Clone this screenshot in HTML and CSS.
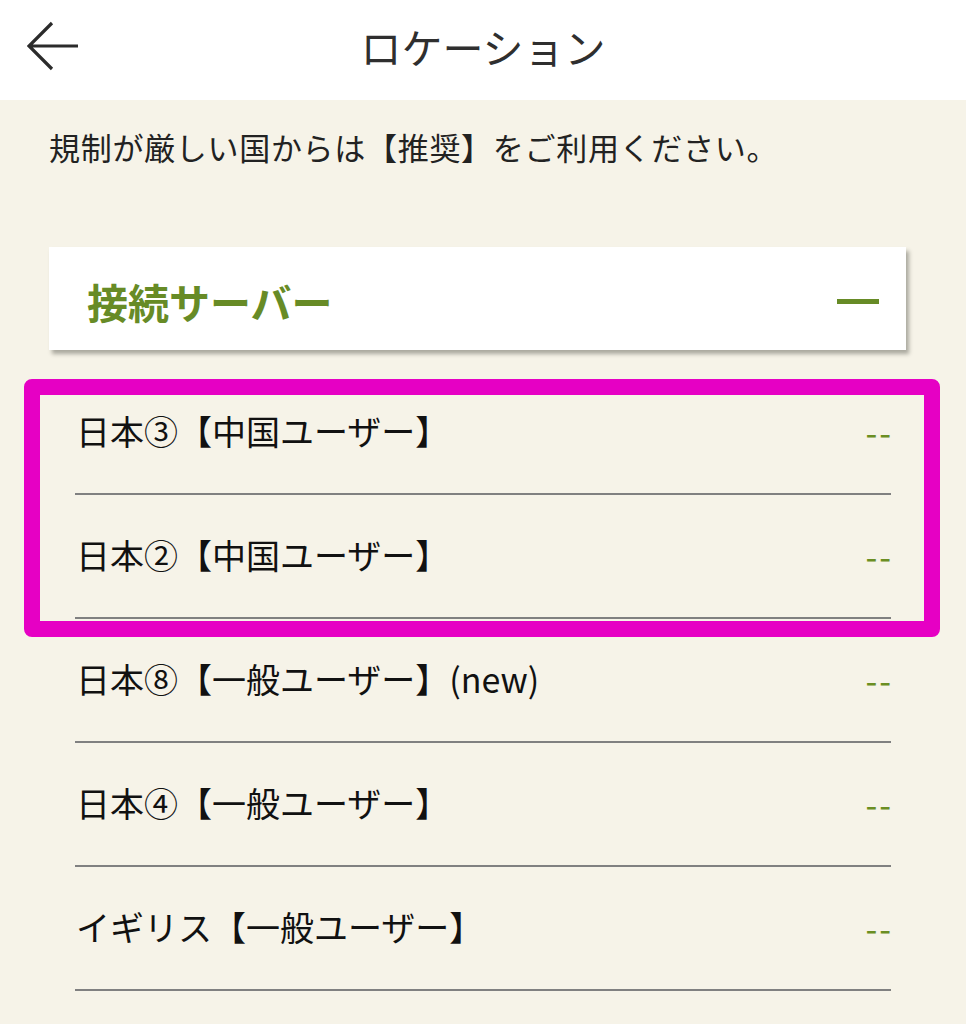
FILE: index.html
```html
<!DOCTYPE html>
<html lang="ja">
<head>
<meta charset="utf-8">
<title>ロケーション</title>
<link rel="stylesheet" href="styles.css">
</head>
<body>
<header class="topbar">
  <div class="back">
    <svg width="54" height="52" viewBox="0 0 54 52" class="back-icon">
      <path d="M25 3 L2 26 L25 49 M2 26 L51 26" fill="none" stroke="#2b2b2b" stroke-width="3.2" stroke-linecap="butt" stroke-linejoin="miter"/>
    </svg>
  </div>
  <h1 class="title">ロケーション</h1>
  <div class="spacer"></div>
</header>
<main class="content">
  <p class="notice">規制が厳しい国からは【推奨】をご利用ください。</p>
  <section class="card">
    <h2 class="card-title">接続サーバー</h2>
    <span class="minus"></span>
  </section>
  <div class="list">
    <div class="row"><span class="name">日本③【中国ユーザー】</span><span class="ping">--</span></div>
    <div class="row"><span class="name">日本②【中国ユーザー】</span><span class="ping">--</span></div>
    <div class="row"><span class="name">日本⑧【一般ユーザー】(new)</span><span class="ping">--</span></div>
    <div class="row"><span class="name">日本④【一般ユーザー】</span><span class="ping">--</span></div>
    <div class="row"><span class="name">イギリス【一般ユーザー】</span><span class="ping">--</span></div>
    <div class="highlight"></div>
  </div>
</main>
</body>
</html>
```
FILE: styles.css
```css
html, body {
  margin: 0;
  padding: 0;
}
body {
  width: 966px;
  height: 1024px;
  overflow: hidden;
  background: #f6f3e8;
  font-family: "Noto Sans CJK JP", "Noto Sans", sans-serif;
  color: #1a1a1a;
}
.topbar {
  height: 100px;
  background: #ffffff;
  display: grid;
  grid-template-columns: 1fr auto 1fr;
  align-items: center;
}
.back {
  padding-left: 27px;
  display: flex;
  align-items: center;
  padding-bottom: 8px;
}
.back-icon {
  display: block;
}
.title {
  margin: 0;
  font-size: 41px;
  font-weight: 400;
  color: #2f2f2f;
  line-height: 1;
  padding-bottom: 8px;
}
.notice {
  margin: 0;
  padding: 26px 0 0 49px;
  font-size: 31px;
  line-height: 42px;
  color: #222;
  letter-spacing: 0.7px;
}
.card {
  margin: 79px 0 0 49px;
  width: 857px;
  height: 103px;
  box-sizing: border-box;
  background: #ffffff;
  box-shadow: 3px 4px 4px rgba(80, 80, 70, 0.45);
  display: flex;
  align-items: center;
  justify-content: space-between;
  padding: 0 27px 0 38px;
}
.card-title {
  margin: 0;
  font-size: 41px;
  font-weight: 700;
  color: #678b26;
  line-height: 1;
  padding-top: 6px;
}
.minus {
  display: block;
  width: 42px;
  height: 5px;
  margin-top: 6px;
  background: #678b26;
}
.list {
  position: relative;
  margin: 21px 75px 0 75px;
}
.row {
  height: 122px;
  border-bottom: 2px solid #808080;
  display: flex;
  align-items: center;
  justify-content: space-between;
}
.name {
  font-size: 34px;
  line-height: 40px;
  color: #111;
  padding-bottom: 2px;
  margin-left: 1px;
}
.ping {
  font-size: 34px;
  line-height: 40px;
  color: #6b8e23;
  letter-spacing: 2px;
  margin-right: -2px;
  padding-bottom: 0;
}
.highlight {
  position: absolute;
  left: -51px;
  top: 8px;
  width: 884px;
  height: 226px;
  border: 16px solid #e600c4;
  border-radius: 8px;
  pointer-events: none;
}
```
